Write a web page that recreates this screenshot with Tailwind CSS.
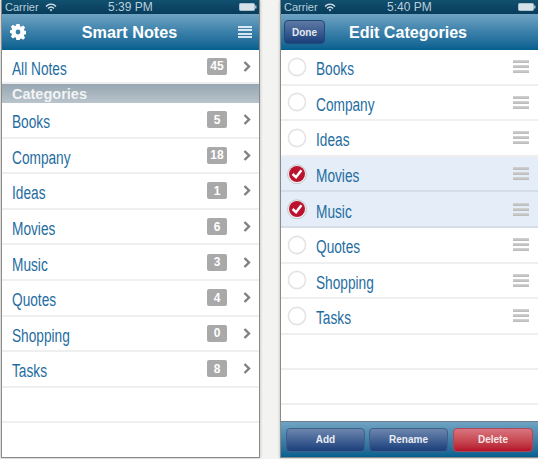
<!DOCTYPE html>
<html lang="en">
<head>
    <meta charset="UTF-8">
    <title>Smart Notes</title>
    <script src="https://cdn.jsdelivr.net/npm/@tailwindcss/browser@4"></script>
</head>
<body class="bg-[#f3f3f1] w-[538px] h-[459px] overflow-hidden font-['Liberation_Sans',sans-serif]">
    <div class="flex h-[459px] pl-px gap-[20px]">
        <!-- list screen -->
        <div class="w-[259px] h-[458px] flex flex-col bg-white border-x border-b border-[#8a8a8a] shadow-[0_0_3px_rgba(0,0,0,0.25)]">
            <div class="h-[14px] shrink-0 bg-gradient-to-b from-[#11506f] to-[#093c5b] flex items-center justify-between pl-[3px] pr-[2px] text-[11px] text-[#b9cfdc] relative">
                <div class="flex items-center gap-[6px]">
                    <span>Carrier</span>
                    <svg width="12" height="9" viewBox="0 0 12 9" fill="none" stroke="#d5e2ea" stroke-width="1.4"><path d="M1 3.4C4 .6 8 .6 11 3.4"/><path d="M3 5.4C4.8 3.8 7.2 3.8 9 5.4"/><path d="M6 8.4 4.6 6.8C5.4 6.2 6.6 6.2 7.4 6.8Z" fill="#d5e2ea" stroke="none"/></svg>
                </div>
                <span class="absolute left-[106px] text-[12px]">5:39 PM</span>
                <svg width="18" height="8" viewBox="0 0 18 8"><rect x=".5" y=".5" width="15" height="7" rx="1" fill="#d5e2ea" stroke="#a9c0ce"/><rect x="16" y="2.5" width="1.5" height="3" fill="#a9c0ce"/></svg>
            </div>
            <div class="h-[36px] shrink-0 bg-gradient-to-b from-[#6fa3c3] via-[#3a80aa] to-[#03608f] flex items-center justify-between pl-[8px] pr-[7px]">
                <svg width="16" height="16" viewBox="0 0 24 24" fill="#fff"><path fill-rule="evenodd" d="M9.6 0h4.8l.6 3.3 1.8.8 2.8-1.9 3.1 3.1-1.9 2.8.8 1.8 3.3.6v4.8l-3.3.6-.8 1.8 1.9 2.8-3.1 3.1-2.8-1.9-1.8.8-.6 3.3H9.6L9 20.7l-1.8-.8-2.8 1.9-3.1-3.1 1.9-2.8-.8-1.8L-.9 13.5V9.5l3.3-.6.8-1.8-1.9-2.8 3.1-3.1 2.8 1.9L9 2.3ZM12 8.4a3.6 3.6 0 1 0 0 7.2 3.6 3.6 0 0 0 0-7.2Z"/></svg>
                <span class="text-[16.2px] font-bold text-white mr-[5px]">Smart Notes</span>
                <div class="w-[14px] h-[12px] flex flex-col justify-between">
                    <div class="h-[2px] bg-white/80"></div><div class="h-[2px] bg-white/80"></div><div class="h-[2px] bg-white/80"></div><div class="h-[2px] bg-white/80"></div>
                </div>
            </div>
            <div id="allNotes"></div>
            <div class="h-[19px] shrink-0 bg-gradient-to-b from-[#97a6b1] to-[#b9c4cc] flex items-center pl-[10px] pt-[2px] text-[14.5px] font-bold text-[#f2f4f5] leading-none">Categories</div>
            <div id="categoryList"></div>
            <div class="h-[35.5px] border-b-2 border-[#efefef]"></div>
        </div>
        <!-- edit screen -->
        <div class="w-[258px] h-[458px] flex flex-col bg-white border-l border-b border-[#8a8a8a] shadow-[0_0_3px_rgba(0,0,0,0.25)]">
            <div class="h-[14px] shrink-0 bg-gradient-to-b from-[#11506f] to-[#093c5b] flex items-center justify-between pl-[3px] pr-[2px] text-[11px] text-[#b9cfdc] relative">
                <div class="flex items-center gap-[6px]">
                    <span>Carrier</span>
                    <svg width="12" height="9" viewBox="0 0 12 9" fill="none" stroke="#d5e2ea" stroke-width="1.4"><path d="M1 3.4C4 .6 8 .6 11 3.4"/><path d="M3 5.4C4.8 3.8 7.2 3.8 9 5.4"/><path d="M6 8.4 4.6 6.8C5.4 6.2 6.6 6.2 7.4 6.8Z" fill="#d5e2ea" stroke="none"/></svg>
                </div>
                <span class="absolute left-[106px] text-[12px]">5:40 PM</span>
                <svg width="18" height="8" viewBox="0 0 18 8"><rect x=".5" y=".5" width="15" height="7" rx="1" fill="#d5e2ea" stroke="#a9c0ce"/><rect x="16" y="2.5" width="1.5" height="3" fill="#a9c0ce"/></svg>
            </div>
            <div class="h-[36px] shrink-0 bg-gradient-to-b from-[#6fa3c3] via-[#3a80aa] to-[#03608f] flex items-center pl-[3px] gap-[24px]">
                <div class="w-[41px] h-[24px] rounded-[4px] border border-[#1f4a78] bg-gradient-to-b from-[#5e79a4] to-[#1b3f7c] flex items-center justify-center text-[10px] font-bold text-[#e4e9f0]">Done</div>
                <span class="text-[16.1px] font-bold text-white">Edit Categories</span>
            </div>
            <div id="editList"></div>
            <div class="h-[35.5px] border-b-2 border-[#efefef]"></div>
            <div class="h-[35px] border-b-2 border-[#efefef]"></div>
            <div class="flex-1"></div>
            <div class="h-[36px] shrink-0 bg-gradient-to-b from-[#6fa3c3] to-[#03608f] border-t border-[#6c7f8c] flex items-center gap-[4px] pl-[5px] pr-[5px]">
                <div class="w-[79px] h-[24px] rounded-[4px] border border-[#3d618a] bg-gradient-to-b from-[#6d86ad] to-[#1b3f7c] flex items-center justify-center text-[10px] font-bold text-[#e8edf3]">Add</div>
                <div class="w-[79px] h-[24px] rounded-[4px] border border-[#3d618a] bg-gradient-to-b from-[#6d86ad] to-[#1b3f7c] flex items-center justify-center text-[10px] font-bold text-[#e8edf3]">Rename</div>
                <div class="ml-px w-[80px] h-[24px] rounded-[4px] border border-[#a84a5a] bg-gradient-to-b from-[#d9747f] to-[#b50e2b] flex items-center justify-center text-[10px] font-bold text-[#f6e6e8]">Delete</div>
            </div>
        </div>
    </div>
    <script>
        const categories = [
            { name: 'Books', count: 5 }, { name: 'Company', count: 18 }, { name: 'Ideas', count: 1 },
            { name: 'Movies', count: 6, checked: true }, { name: 'Music', count: 3, checked: true },
            { name: 'Quotes', count: 4 }, { name: 'Shopping', count: 0 }, { name: 'Tasks', count: 8 }
        ];

        function listRow(name, count, height) {
            return `<div class="flex items-center border-b-2 border-[#efefef] pl-[10px] pr-[8px]" style="height:${height}px">
                <span class="flex-1 pt-[6px] origin-left scale-x-[0.76] text-[18px] text-[#1f6d9f]">${name}</span>
                <span class="w-[20px] h-[17px] rounded-[2px] bg-[#a9a9a9] text-white text-[12px] font-bold flex items-center justify-center">${count}</span>
                <svg class="ml-[16px]" width="8" height="11" viewBox="0 0 8 11" fill="none" stroke="#808080" stroke-width="2.4"><path d="M1.5 1 6 5.5 1.5 10"/></svg>
            </div>`;
        }

        function editRow(cat) {
            const mark = cat.checked
                ? `<svg width="20" height="20" viewBox="0 0 20 20"><circle cx="10" cy="10.3" r="9.4" fill="#f7f7f7" stroke="#aaa" stroke-width=".6"/><circle cx="10" cy="10" r="8" fill="#bb1230"/><path d="M5.6 10 9 13.2l5.4-7" fill="none" stroke="#fff" stroke-width="2.5"/></svg>`
                : `<svg width="20" height="20" viewBox="0 0 20 20"><circle cx="10" cy="10" r="8.6" fill="#fff" stroke="#e4e4e4" stroke-width="1.6"/></svg>`;
            const bg = cat.checked ? 'bg-[#e5edf8] border-[#d5dde8]' : 'bg-white border-[#efefef]';
            return `<div class="flex items-center h-[35.6px] border-b-2 ${bg} pl-[6px] pr-[9px]">
                ${mark}
                <span class="flex-1 pt-[6px] ml-[9px] origin-left scale-x-[0.76] text-[18px] text-[#1f6d9f]">${cat.name}</span>
                <div class="w-[16px] h-[13px] flex flex-col justify-between">
                    <div class="h-[3px] bg-gradient-to-b from-[#d4d4d4] to-[#b8b8b8]"></div><div class="h-[3px] bg-gradient-to-b from-[#d4d4d4] to-[#b8b8b8]"></div><div class="h-[3px] bg-gradient-to-b from-[#d4d4d4] to-[#b8b8b8]"></div>
                </div>
            </div>`;
        }

        document.getElementById('allNotes').innerHTML = listRow('All Notes', 45, 34);
        document.getElementById('categoryList').innerHTML = categories.map(c => listRow(c.name, c.count, 35.6)).join('');
        document.getElementById('editList').innerHTML = categories.map(editRow).join('');
    </script>
</body>
</html>
